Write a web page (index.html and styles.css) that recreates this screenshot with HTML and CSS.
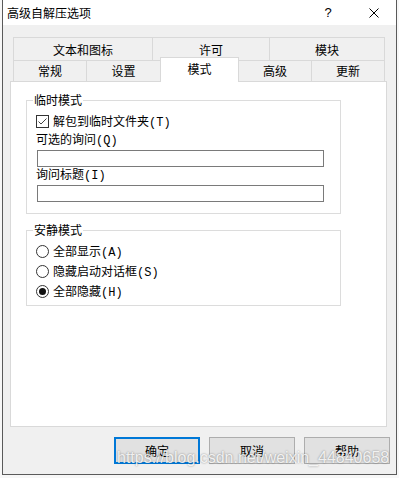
FILE: index.html
```html
<!DOCTYPE html>
<html lang="zh-CN">
<head>
  <meta charset="UTF-8" />
  <meta name="viewport" content="width=device-width, initial-scale=1.0" />
  <title>高级自解压选项</title>
  <link rel="stylesheet" href="styles.css">
</head>
<body>
  <div class="window">
    <div class="titlebar">
      <span class="title">高级自解压选项</span>
      <span class="cap help">?</span>
      <span class="cap close">
        <svg width="10" height="10" viewBox="0 0 10 10"><path d="M0.5 0.5 L9.5 9.5 M9.5 0.5 L0.5 9.5" stroke="#000" stroke-width="1" fill="none"/></svg>
      </span>
    </div>
    <div class="content">
      <div class="tabs">
        <div class="tab-row row1">
          <div class="tab">文本和图标</div>
          <div class="tab">许可</div>
          <div class="tab last">模块</div>
        </div>
        <div class="tab-row row2">
          <div class="tab">常规</div>
          <div class="tab">设置</div>
          <div class="tab active">模式</div>
          <div class="tab">高级</div>
          <div class="tab last">更新</div>
        </div>
      </div>
      <div class="panel">
        <fieldset class="group first">
          <legend>临时模式</legend>
          <label class="option check-row">
            <svg class="mark" width="13" height="13" viewBox="0 0 13 13"><rect x="0.5" y="0.5" width="12" height="12" fill="#fff" stroke="#333"/><path d="M2.5 6.5 L5 9 L10.5 3.5" stroke="#444" stroke-width="1" fill="none"/></svg>
            解包到临时文件夹(T)
          </label>
          <div class="field-label">可选的询问(Q)</div>
          <div class="input"></div>
          <div class="field-label">询问标题(I)</div>
          <div class="input"></div>
        </fieldset>
        <fieldset class="group second">
          <legend>安静模式</legend>
          <label class="option radio-row">
            <svg class="mark" width="13" height="13" viewBox="0 0 13 13"><circle cx="6.5" cy="6.5" r="6" fill="#fff" stroke="#333"/></svg>
            全部显示(A)
          </label>
          <label class="option radio-row">
            <svg class="mark" width="13" height="13" viewBox="0 0 13 13"><circle cx="6.5" cy="6.5" r="6" fill="#fff" stroke="#333"/></svg>
            隐藏启动对话框(S)
          </label>
          <label class="option radio-row">
            <svg class="mark" width="13" height="13" viewBox="0 0 13 13"><circle cx="6.5" cy="6.5" r="6" fill="#fff" stroke="#333"/><circle cx="6.5" cy="6.5" r="3.5" fill="#111"/></svg>
            全部隐藏(H)
          </label>
        </fieldset>
      </div>
      <div class="buttons">
        <button class="btn default">确定</button>
        <button class="btn">取消</button>
        <button class="btn">帮助</button>
      </div>
    </div>
    <div class="watermark">https://blog.csdn.net/weixin_44840658</div>
  </div>
</body>
</html>
```

FILE: styles.css
```css
* { box-sizing: border-box; }
body { margin: 0; background: #f7f7f7; font-family: "Noto Sans CJK SC", "Liberation Sans", sans-serif; font-size: 12px; color: #000; }
.window { position: relative; margin-left: 2px; width: 395px; height: 475px; border: 1px solid #5a5a5a; border-top: none; background: #f0f0f0; }
.titlebar { display: flex; align-items: center; height: 25px; background: #fff; }
.title { flex: 1; padding-left: 4px; line-height: 25px; }
.cap { display: flex; align-items: center; justify-content: center; height: 25px; }
.help { width: 46px; font-family: "Liberation Sans", sans-serif; font-size: 13px; }
.close { width: 45px; }
.content { padding: 12px 0 0 7px; }
.tabs { margin-left: 3px; width: 372px; }
.tab-row { display: grid; }
.row1 { grid-template-columns: 139px 117px 116px; grid-template-rows: 23px; }
.row2 { grid-template-columns: 73px 74px 78px 73px 74px; grid-template-rows: 21px; }
.tab { border-top: 1px solid #d9d9d9; border-left: 1px solid #d9d9d9; background: #f0f0f0; text-align: center; display: flex; align-items: center; justify-content: center; padding-bottom: 1px; }
.row1 .tab { padding-bottom: 0; }
.tab.last { border-right: 1px solid #d9d9d9; }
.tab.active { background: #fff; border-right: 1px solid #d9d9d9; margin: -3px -1px -1px 0; z-index: 1; padding-bottom: 3px; }
.panel { width: 377px; height: 346px; background: #fff; border: 1px solid #d9d9d9; padding-top: 11px; }
.group { margin: 0 0 0 15px; width: 315px; border: 1px solid #dcdcdc; padding: 4px 9px 11px; min-width: 0; }
.group.second { margin-top: 9px; padding-bottom: 4px; }
legend { padding: 0 1px; margin-left: -3px; line-height: 14px; }
.option { display: flex; align-items: center; height: 20px; font-family: "Liberation Mono", "Noto Sans CJK SC", monospace; }
.mark { flex: none; margin-right: 4px; }
.field-label { height: 18px; line-height: 18px; margin-top: 1px; font-family: "Liberation Mono", "Noto Sans CJK SC", monospace; }
.field-label + .input + .field-label { margin-top: 0; }
.input { margin-left: 1px; width: 287px; height: 17px; border: 1px solid #7a7a7a; background: #fff; }
.buttons { display: flex; justify-content: flex-end; gap: 9px; margin-top: 10px; padding-right: 6px; }
.btn { width: 86px; height: 27px; background: #e1e1e1; border: 1px solid #adadad; font-family: inherit; font-size: 12px; padding: 0; }
.btn.default { border: 2px solid #0078d7; }
.watermark { position: absolute; left: 114px; top: 449px; font-family: "Liberation Sans", sans-serif; font-size: 16px; line-height: 18px; color: rgba(255, 255, 255, 0.85); text-shadow: 0 0 2px rgba(0, 0, 0, 0.45); white-space: nowrap; }
```
